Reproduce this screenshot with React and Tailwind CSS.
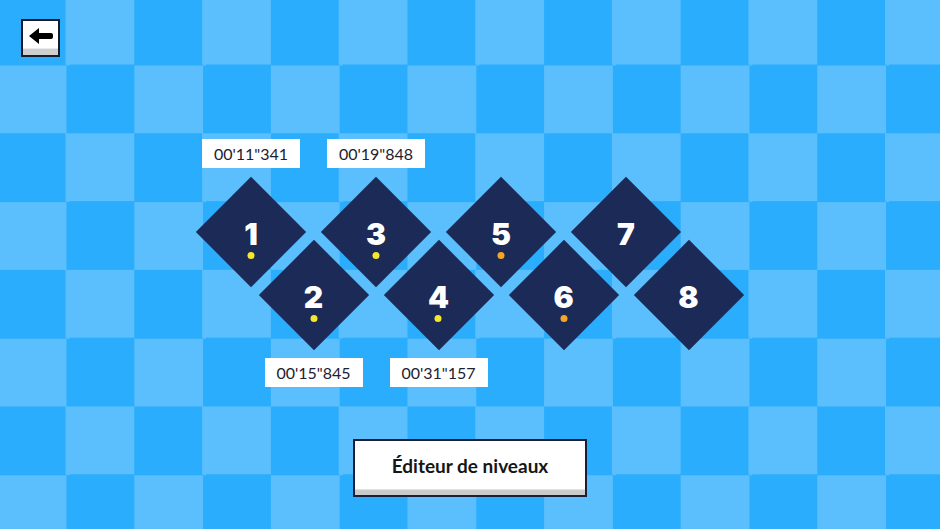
import React from 'react'

// level map: centre of each diamond in page coords
const levels = [
  { n: 1, x: 251, y: 232, dot: 'bg-[#f6e62c]', time: "00'11\"341", side: 'top' },
  { n: 2, x: 313.5, y: 295, dot: 'bg-[#f6e62c]', time: "00'15\"845", side: 'bottom' },
  { n: 3, x: 376, y: 232, dot: 'bg-[#f6e62c]', time: "00'19\"848", side: 'top' },
  { n: 4, x: 438.5, y: 295, dot: 'bg-[#f6e62c]', time: "00'31\"157", side: 'bottom' },
  { n: 5, x: 501, y: 232, dot: 'bg-[#f5a623]' },
  { n: 6, x: 563.5, y: 295, dot: 'bg-[#f5a623]' },
  { n: 7, x: 626, y: 232 },
  { n: 8, x: 688.5, y: 295 },
]

const MAP_TOP = 130

function Diamond({ level }) {
  return (
    <div
      className="absolute w-[110px] h-[110px] flex items-center justify-center"
      style={{ left: level.x - 55, top: level.y - 55 - MAP_TOP }}
    >
      <div className="absolute w-[78px] h-[78px] rotate-45 bg-[#1b2a56]" />
      <div className="relative translate-y-[2px]">
        <span className="block text-[30px] leading-none font-black text-white font-['Inter','DejaVu_Sans',sans-serif]">
          {level.n}
        </span>
        {level.dot && (
          <span className={`absolute left-1/2 -translate-x-1/2 top-[33px] w-[7px] h-[7px] rounded-full ${level.dot}`} />
        )}
      </div>
    </div>
  )
}

function TimeLabel({ level }) {
  const top = level.side === 'top' ? 139 - MAP_TOP : 358 - MAP_TOP
  return (
    <div
      className="absolute w-[98px] h-[29px] bg-white flex items-center justify-center text-[16px] text-[#1e2132] font-['Lato','Liberation_Sans',sans-serif]"
      style={{ left: level.x - 49, top }}
    >
      {level.time}
    </div>
  )
}

export default function App() {
  return (
    <div className="w-[940px] h-[529px] overflow-hidden flex flex-col bg-[#2aadfc] bg-[image:repeating-conic-gradient(#5bbefd_0%_25%,#2aadfc_0%_50%)] bg-[length:136.6px_136.6px] bg-[position:-2.3px_-3.3px] font-['Lato','Liberation_Sans',sans-serif]">
      {/* Back button */}
      <button className="ml-[21px] mt-[19px] w-[39px] h-[38px] border-2 border-[#161a2b] bg-white flex flex-col">
        <div className="flex-1 flex items-center justify-center pt-[3px]">
          <svg width="24" height="16" viewBox="0 0 24 16">
            <polygon points="0,8 10,0 10,16" fill="#000" />
            <rect x="8" y="5" width="16" height="6" rx="2" fill="#000" />
          </svg>
        </div>
        <div className="h-[7px] bg-[#cfcfcf] border-t border-[#ececec]" />
      </button>

      {/* Level map */}
      <div className="relative h-[270px] mt-[73px]">
        {levels.map((l) => (
          <Diamond key={l.n} level={l} />
        ))}
        {levels.filter((l) => l.time).map((l) => (
          <TimeLabel key={'t' + l.n} level={l} />
        ))}
      </div>

      {/* Level editor */}
      <button className="self-center mt-[39px] w-[234px] h-[58px] border-2 border-[#1a1f35] bg-white flex flex-col">
        <div className="flex-1 flex items-center justify-center pt-[2px] text-[19px] font-bold text-[#161616]">
          Éditeur de niveaux
        </div>
        <div className="h-[6px] bg-[#cbcbcb] border-t border-[#e4e4e4]" />
      </button>
    </div>
  )
}
